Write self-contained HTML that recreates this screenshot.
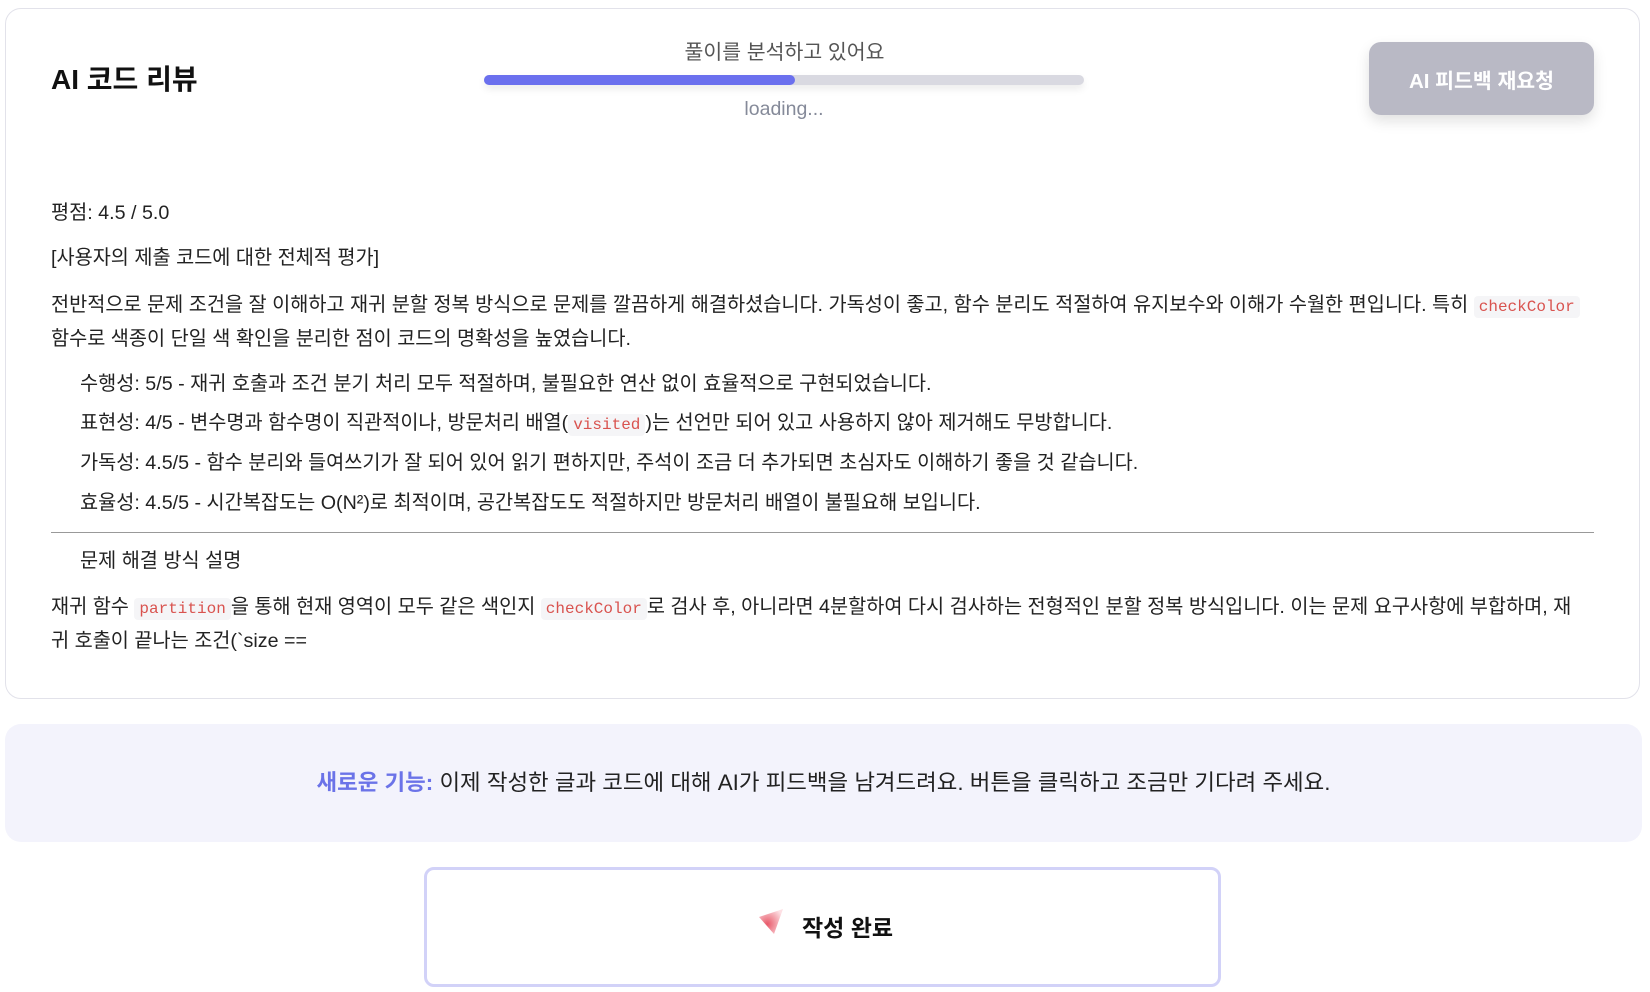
<!DOCTYPE html>
<html><head><meta charset="utf-8"><style>
body{margin:0;width:1650px;height:992px;background:#fff;font-family:"Liberation Sans","Noto Sans CJK KR",sans-serif;color:#222;overflow:hidden;position:relative}
.card{position:absolute;left:5px;top:8px;width:1635px;height:691px;border:1px solid #e2e2ea;border-radius:16px;box-sizing:border-box}
.abs{position:absolute;white-space:nowrap}
.t{font-size:19.7px;color:#222;line-height:1}
code{font-family:"Liberation Mono",monospace;font-size:16px;color:#d9534f;background:#f5f5f7;border-radius:4px;padding:2px 5px}
</style></head><body>
<div class="card"></div>
<div class="abs" style="left:51px;top:58px;font-size:28px;font-weight:bold;color:#111">AI 코드 리뷰</div>
<div class="abs" style="left:484px;width:601px;top:35px;text-align:center;font-size:20.5px;color:#555">풀이를 분석하고 있어요</div>
<div class="abs" style="left:484px;top:75px;width:600px;height:10px;border-radius:5px;background:#d9d9e1;box-shadow:0 4px 8px rgba(0,0,0,0.08)"><div style="width:311px;height:10px;border-radius:5px;background:#6b70ee"></div></div>
<div class="abs" style="left:484px;width:600px;top:98px;text-align:center;font-size:19.5px;color:#858a99">loading...</div>
<div class="abs" style="left:1369px;top:42px;width:225px;height:73px;border-radius:12px;background:#b9b9c5;color:#fff;font-weight:bold;font-size:20.5px;display:flex;align-items:center;justify-content:center;box-shadow:0 6px 14px rgba(0,0,0,0.12)">AI 피드백 재요청</div>

<div class="abs t" style="left:51px;top:204px">평점: 4.5 / 5.0</div>
<div class="abs t" style="left:51px;top:249px">[사용자의 제출 코드에 대한 전체적 평가]</div>
<div class="abs t" style="left:51px;top:296px">전반적으로 문제 조건을 잘 이해하고 재귀 분할 정복 방식으로 문제를 깔끔하게 해결하셨습니다. 가독성이 좋고, 함수 분리도 적절하여 유지보수와 이해가 수월한 편입니다. 특히 <code>checkColor</code></div>
<div class="abs t" style="left:51px;top:330px">함수로 색종이 단일 색 확인을 분리한 점이 코드의 명확성을 높였습니다.</div>
<div class="abs t" style="left:80px;top:375px">수행성: 5/5 - 재귀 호출과 조건 분기 처리 모두 적절하며, 불필요한 연산 없이 효율적으로 구현되었습니다.</div>
<div class="abs t" style="left:80px;top:414px">표현성: 4/5 - 변수명과 함수명이 직관적이나, 방문처리 배열(<code>visited</code>)는 선언만 되어 있고 사용하지 않아 제거해도 무방합니다.</div>
<div class="abs t" style="left:80px;top:454px">가독성: 4.5/5 - 함수 분리와 들여쓰기가 잘 되어 있어 읽기 편하지만, 주석이 조금 더 추가되면 초심자도 이해하기 좋을 것 같습니다.</div>
<div class="abs t" style="left:80px;top:494px">효율성: 4.5/5 - 시간복잡도는 O(N²)로 최적이며, 공간복잡도도 적절하지만 방문처리 배열이 불필요해 보입니다.</div>
<div class="abs" style="left:51px;top:532px;width:1543px;height:1px;background:#999"></div>
<div class="abs t" style="left:80px;top:552px">문제 해결 방식 설명</div>
<div class="abs t" style="left:51px;top:598px">재귀 함수 <code>partition</code>을 통해 현재 영역이 모두 같은 색인지 <code>checkColor</code>로 검사 후, 아니라면 4분할하여 다시 검사하는 전형적인 분할 정복 방식입니다. 이는 문제 요구사항에 부합하며, 재</div>
<div class="abs t" style="left:51px;top:632px">귀 호출이 끝나는 조건(`size ==</div>

<div class="abs" style="left:5px;top:724px;width:1637px;height:118px;border-radius:16px;background:#f3f3fc"></div>
<div class="abs" style="left:5px;width:1637px;top:765px;text-align:center;font-size:22.4px;color:#222">
<span style="color:#6b73e8;font-weight:bold">새로운 기능:</span> 이제 작성한 글과 코드에 대해 AI가 피드백을 남겨드려요. 버튼을 클릭하고 조금만 기다려 주세요.</div>

<div class="abs" style="left:424px;top:867px;width:797px;height:120px;border:3px solid #d2d2f8;border-radius:10px;box-sizing:border-box;background:#fff"></div>
<svg class="abs" style="left:757px;top:908px" width="28" height="28" viewBox="0 0 28 28"><defs><radialGradient id="g" cx="0.35" cy="0.6" r="0.7"><stop offset="0" stop-color="#e85a6a"/><stop offset="1" stop-color="#fde0e4"/></radialGradient></defs><path d="M2 9 L26 1 L17 26 Z" fill="url(#g)"/></svg>
<div class="abs" style="left:802px;top:909px;font-size:23px;font-weight:bold;color:#111">작성 완료</div>
</body></html>
